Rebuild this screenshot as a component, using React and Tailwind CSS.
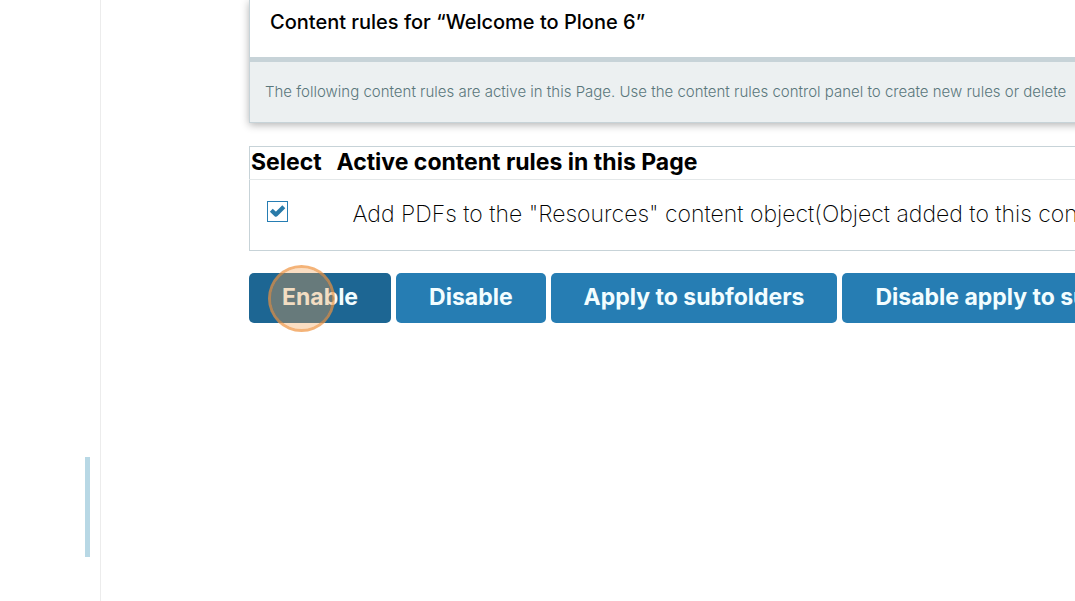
const button =
  "h-[50px] shrink-0 rounded-[5px] px-[33px] pb-[2px] text-[23px] leading-7 font-bold whitespace-nowrap text-[#f2fdff]";

export default function App() {
  return (
    <div className="flex min-h-screen overflow-hidden bg-white font-['Inter',sans-serif] text-black">
      <aside className="flex w-[101px] shrink-0 justify-end border-r border-[#ececec] pt-[457px] pr-[10px]">
        <div className="h-[100px] w-[5px] bg-[#b8d8e5]" />
      </aside>
      <main className="min-w-0 flex-1 overflow-hidden pl-[148px]">
        <section className="-mr-4 border-b border-l border-[#c7d3d8] shadow-[0_2px_8px_rgba(0,0,0,0.3)]">
          <h1 className="px-5 pt-2 pb-[21px] text-xl leading-7 font-medium">
            Content rules for “Welcome to Plone 6”
          </h1>
          <p className="border-t-[5px] border-[#c7d3d8] bg-[#ecf0f1] py-[18px] pl-[15px] text-[15px] leading-6 font-light whitespace-nowrap text-[#5a777c]">
            The following content rules are active in this Page. Use the content rules control panel to create new rules or delete
          </p>
        </section>
        <table className="mt-[23px] w-full table-fixed border-collapse border-y border-l border-[#c7d3d8] text-left text-[23px] leading-8">
          <thead>
            <tr className="border-b border-[#e4e8e9]">
              <th scope="col" className="w-[87px] p-0 pb-[2px] pl-px leading-[30px] font-bold">Select</th>
              <th scope="col" className="p-0 pb-[2px] leading-[30px] font-bold">Active content rules in this Page</th>
            </tr>
          </thead>
          <tbody>
            <tr>
              <td className="pt-[21px] pl-[17px] align-top">
                <label className="relative block h-[21px] w-[21px]">
                  <input type="checkbox" defaultChecked aria-label="Select rule" className="peer block h-[21px] w-[21px] appearance-none border border-[#267db3]" />
                  <svg viewBox="0 0 21 21" className="pointer-events-none absolute inset-0 hidden peer-checked:block" fill="none" stroke="#2a7ba9" strokeWidth="4.2" strokeLinejoin="round">
                    <path d="M4.3 9.3l4.7 4.3 7.8-7.8" />
                  </svg>
                </label>
              </td>
              <td className="pt-[18px] pb-5 pl-4 font-extralight whitespace-nowrap">
                Add PDFs to the "Resources" content object(Object added to this container)
              </td>
            </tr>
          </tbody>
        </table>
        <div className="mt-[22px] flex gap-[5px]">
          <button type="button" className={button + " relative bg-[#1d6693]"}>
            Enable
            <span className="pointer-events-none absolute -top-2 left-[19px] h-[67px] w-[67px] rounded-full border-[3px] border-[#f0933f]/70 bg-[#f4a050]/35 bg-clip-padding" />
          </button>
          <button type="button" className={button + " bg-[#267db3]"}>Disable</button>
          <button type="button" className={button + " bg-[#267db3]"}>Apply to subfolders</button>
          <button type="button" className={button + " bg-[#267db3]"}>Disable apply to subfolders</button>
        </div>
      </main>
    </div>
  );
}
